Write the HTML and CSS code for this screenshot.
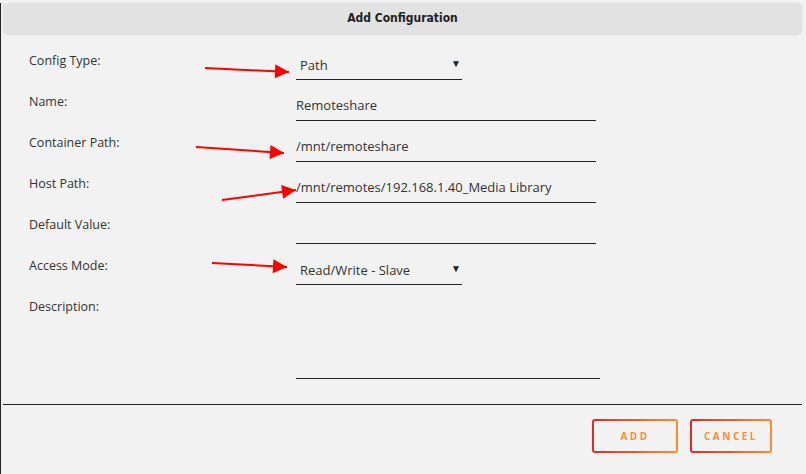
FILE: index.html
```html
<!DOCTYPE html>
<html lang="en">
<head>
    <meta charset="UTF-8">
    <title>Add Configuration</title>
    <link rel="stylesheet" href="styles.css">
</head>
<body>
    <div class="dialog">
        <div class="dialogTitle">Add Configuration</div>

        <div class="form">
            <div class="row">
                <label class="label">Config Type:</label>
                <div class="field select short">
                    <span>Path</span><span class="caret">&#9660;</span>
                </div>
            </div>
            <div class="row">
                <label class="label">Name:</label>
                <div class="field">Remoteshare</div>
            </div>
            <div class="row">
                <label class="label">Container Path:</label>
                <div class="field">/mnt/remoteshare</div>
            </div>
            <div class="row">
                <label class="label">Host Path:</label>
                <div class="field">/mnt/remotes/192.168.1.40_Media Library</div>
            </div>
            <div class="row">
                <label class="label">Default Value:</label>
                <div class="field"></div>
            </div>
            <div class="row">
                <label class="label">Access Mode:</label>
                <div class="field select short">
                    <span>Read/Write - Slave</span><span class="caret">&#9660;</span>
                </div>
            </div>
            <div class="row tall">
                <label class="label">Description:</label>
                <div class="field textarea"></div>
            </div>
        </div>

        <div class="buttonBar">
            <button class="actionButton addButton">ADD</button>
            <button class="actionButton cancelButton">CANCEL</button>
        </div>

        <!-- red pointers drawn on top of the form -->
        <svg class="pointers" width="806" height="474" viewBox="0 0 806 474">
            <defs>
                <marker id="head" viewBox="0 0 10 10" refX="10" refY="5" markerWidth="24" markerHeight="14" markerUnits="userSpaceOnUse" orient="auto">
                    <path d="M0 0 L10 5 L0 10 Z" fill="#ff0000"/>
                </marker>
            </defs>
            <line x1="205" y1="65" x2="289" y2="69" stroke="#ff0000" stroke-width="2" marker-end="url(#head)"/>
            <line x1="196" y1="144" x2="284" y2="150" stroke="#ff0000" stroke-width="2" marker-end="url(#head)"/>
            <line x1="222" y1="197" x2="296" y2="187" stroke="#ff0000" stroke-width="2" marker-end="url(#head)"/>
            <line x1="212" y1="260" x2="287" y2="264" stroke="#ff0000" stroke-width="2" marker-end="url(#head)"/>
        </svg>
    </div>
</body>
</html>
```

FILE: styles.css
```css
body {
    margin: 0;
    padding: 0;
    background-color: #f2f2f2;
    font-family: "Open Sans", "Noto Sans", sans-serif;
    color: #333;
}
.dialog {
    position: relative;
    height: 472px;
    border-left: 1px solid #222;
    border-bottom: 2px solid #222;
    border-bottom-left-radius: 3px;
}
.dialogTitle {
    margin: 3px 4px 0 2px;
    height: 32px;
    line-height: 31px;
    background-color: #e2e2e2;
    border-radius: 5px;
    box-shadow: 0 0 2px rgba(0, 0, 0, 0.08);
    text-align: center;
    font-family: "DejaVu Sans Condensed", "DejaVu Sans", sans-serif;
    font-weight: bold;
    font-size: 12px;
    color: #222;
}
.form {
    padding: 4px 0 0 28px;
}
.row {
    display: grid;
    grid-template-columns: 267px 300px;
    height: 41px;
}
.row.tall {
    height: 94px;
}
.label {
    padding-top: 14px;
    font-size: 12.5px;
    line-height: 16px;
}
.field {
    align-self: end;
    height: 24px;
    border-bottom: 1px solid #222;
    font-size: 13px;
    line-height: 18px;
    white-space: nowrap;
}
.select {
    display: flex;
    justify-content: space-between;
    padding: 0 1px 0 4px;
    line-height: 20px;
}
.short {
    width: 161px;
}
.caret {
    font-size: 10px;
    color: #222;
    line-height: 16px;
}
.textarea {
    width: 304px;
}
.buttonBar {
    margin: 25px 4px 0 2px;
    padding-top: 14px;
    border-top: 1px solid #222;
    display: flex;
    justify-content: flex-end;
    gap: 12px;
    padding-right: 30px;
}
.actionButton {
    height: 34px;
    border: 2px solid transparent;
    border-radius: 3px;
    background: linear-gradient(#f2f2f2, #f2f2f2) padding-box,
                linear-gradient(90deg, #e22828, #ff8c2f) border-box;
    color: #ff8c2f;
    font-family: "Open Sans", sans-serif;
    font-weight: 700;
    font-size: 10px;
    letter-spacing: 2.5px;
    cursor: pointer;
}
.addButton {
    width: 86px;
}
.cancelButton {
    width: 82px;
}
.pointers {
    position: absolute;
    left: -1px;
    top: 0;
    pointer-events: none;
}
```
